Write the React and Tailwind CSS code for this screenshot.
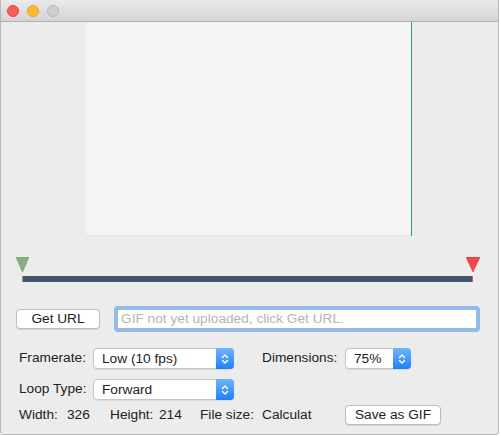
import React from 'react';

const font = { fontFamily: '"Liberation Sans", Arial, sans-serif' };

const Stepper = () => (
    <div className="w-[18px] self-stretch rounded-r-[4px] bg-gradient-to-b from-[#6db4fb] to-[#1c7ffa] flex items-center justify-center -my-px -mr-px">
        <svg width="8" height="12" viewBox="0 0 8 12" fill="none" stroke="white" strokeWidth="1.4" strokeLinecap="round" strokeLinejoin="round">
            <path d="M1.5 4.5 L4 2 L6.5 4.5" />
            <path d="M1.5 7.5 L4 10 L6.5 7.5" />
        </svg>
    </div>
);

const Select = ({ value, width }) => (
    <div className={`${width} h-[21px] flex items-stretch bg-white border border-[#c6c6c6] rounded-[4px] shadow-[0_1px_1px_rgba(0,0,0,0.08)]`}>
        <span className="flex-1 pl-[8px] text-[13.7px] leading-[19px] text-[#222]">{value}</span>
        <Stepper />
    </div>
);

const Button = ({ label, width }) => (
    <div className={`${width} h-[20px] bg-white border border-[#bdbdbd] rounded-[4px] shadow-[0_1px_1px_rgba(0,0,0,0.1)] flex items-center justify-center text-[13.7px] text-[#222]`}>
        {label}
    </div>
);

export default function App() {
    return (
        <div className="w-[501px] h-[436px] bg-white" style={font}>
            <div className="w-[499px] h-[435px] bg-[#ececec] border border-t-0 border-[#b9b9b9] rounded-b-[4px] flex flex-col overflow-hidden">
                {/* title bar */}
                <div className="h-[22px] bg-gradient-to-b from-[#ebe9eb] to-[#d5d3d5] border-b border-[#b2b2b2] flex items-center pl-[6px] gap-[8px]">
                    <div className="w-[12px] h-[12px] rounded-full bg-[#fc5b57] border border-[#e0443e]" />
                    <div className="w-[12px] h-[12px] rounded-full bg-[#fdbb2e] border border-[#dea123]" />
                    <div className="w-[12px] h-[12px] rounded-full bg-[#d0cfd0] border border-[#b9b8b9]" />
                </div>

                {/* preview */}
                <div className="pl-[85px] flex">
                    <div className="w-[325px] h-[214px] bg-[#f4f4f4] border-b border-[#e4e4e4]" />
                    <div className="w-px h-[214px] bg-[repeating-linear-gradient(to_bottom,#1fa83a_0px,#1fa83a_5px,#4a90d0_5px,#4a90d0_7px)]" />
                </div>

                {/* range slider */}
                <div className="relative mt-[21px] h-[25px] ml-[21px] w-[451px]">
                    <svg className="absolute left-[-6px] top-0" width="13" height="15" viewBox="0 0 13 15">
                        <path d="M0 0 H13 L6.5 15 Z" fill="#86b07c" stroke="#6f9a66" strokeWidth="0.6" />
                    </svg>
                    <svg className="absolute right-[-7px] top-0" width="14" height="15" viewBox="0 0 14 15">
                        <path d="M0 0 H14 L7 15 Z" fill="#f3484a" stroke="#d23236" strokeWidth="0.6" />
                    </svg>
                    <div className="absolute left-0 right-0 top-[19px] h-[6px] bg-[#43556c] border-l border-l-[#7ea877] border-r border-r-[#e0585a]" />
                </div>

                {/* url row */}
                <div className="mt-[24px] flex items-center">
                    <div className="ml-[15px]">
                        <Button label="Get URL" width="w-[84px]" />
                    </div>
                    <div className="ml-[14px] w-[366px] h-[26px] rounded-[4px] bg-[#8fbbed] p-[3px]">
                        <div className="h-full bg-white border border-[#9fb8d6] flex items-center pl-[3px] text-[13.7px] text-[#b4b4b4]">
                            GIF not yet uploaded, click Get URL.
                        </div>
                    </div>
                </div>

                {/* framerate row */}
                <div className="mt-[16px] flex items-center text-[13.7px] text-[#222]">
                    <span className="ml-[18px] w-[74px]">Framerate:</span>
                    <Select value="Low (10 fps)" width="w-[141px]" />
                    <span className="ml-[28px] w-[83px]">Dimensions:</span>
                    <Select value="75%" width="w-[66px]" />
                </div>

                {/* loop row */}
                <div className="mt-[10px] flex items-center text-[13.7px] text-[#222]">
                    <span className="ml-[18px] w-[74px]">Loop Type:</span>
                    <Select value="Forward" width="w-[141px]" />
                </div>

                {/* info row */}
                <div className="mt-[5px] flex items-center text-[13.7px] text-[#222]">
                    <span className="ml-[18px] w-[48px]">Width:</span>
                    <span className="w-[43px]">326</span>
                    <span className="w-[49px]">Height:</span>
                    <span className="w-[41px]">214</span>
                    <span className="w-[62px]">File size:</span>
                    <span className="w-[83px]">Calculat</span>
                    <Button label="Save as GIF" width="w-[96px]" />
                </div>
            </div>
        </div>
    );
}
